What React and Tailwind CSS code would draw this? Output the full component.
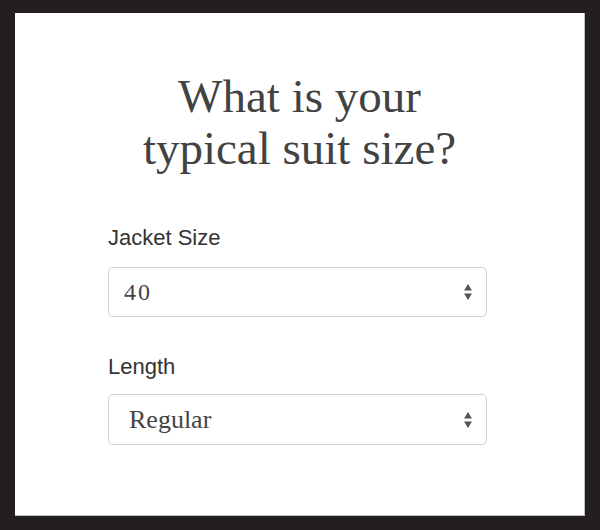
import { useState } from "react";

const Arrows = () => (
  <svg
    width="10"
    height="18"
    viewBox="0 0 10 18"
    className="pointer-events-none absolute right-[14px] top-1/2 -translate-y-1/2"
  >
    <path d="M5 1 L9 7.5 L1 7.5 Z" fill="#555" />
    <path d="M5 17 L9 10.5 L1 10.5 Z" fill="#555" />
  </svg>
);

export default function App() {
  const [jacket, setJacket] = useState("40");
  const [length, setLength] = useState("Regular");

  return (
    <div className="h-[530px] w-[600px] bg-[#231f20] pl-[15px] pt-[13px]">
      <div className="h-[503px] w-[570px] border-b border-r border-[#bdbdbd] bg-white pt-[57px]">
        <h1 className="text-center font-['Liberation_Serif',serif] text-[47px] leading-[52px] font-normal text-[#424242]">
          What is your
          <br />
          typical suit size?
        </h1>

        <div className="ml-[93px] mt-[51px] w-[379px]">
          <label className="block font-['Liberation_Sans',Arial,sans-serif] text-[22px] leading-[26px] text-[#333]">
            Jacket Size
          </label>
          <div className="relative mt-[16px]">
            <select
              value={jacket}
              onChange={(e) => setJacket(e.target.value)}
              className="block h-[50px] w-full appearance-none rounded-[5px] border border-[#cfcfcf] bg-white pl-[15px] font-['Liberation_Serif',serif] text-[24px] tracking-[2px] text-[#444] outline-none"
            >
              {["36", "38", "40", "42", "44", "46"].map((s) => (
                <option key={s}>{s}</option>
              ))}
            </select>
            <Arrows />
          </div>

          <label className="mt-[37px] block font-['Liberation_Sans',Arial,sans-serif] text-[22px] leading-[26px] text-[#333]">
            Length
          </label>
          <div className="relative mt-[14px]">
            <select
              value={length}
              onChange={(e) => setLength(e.target.value)}
              className="block h-[51px] w-full appearance-none rounded-[5px] border border-[#cfcfcf] bg-white pl-[20px] font-['Liberation_Serif',serif] text-[26px] text-[#444] outline-none"
            >
              {["Short", "Regular", "Long"].map((s) => (
                <option key={s}>{s}</option>
              ))}
            </select>
            <Arrows />
          </div>
        </div>
      </div>
    </div>
  );
}
